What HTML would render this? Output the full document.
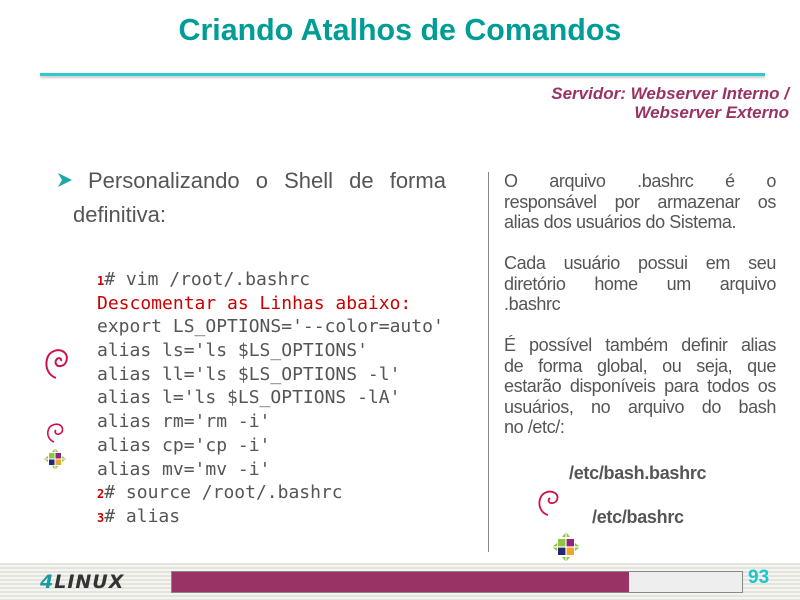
<!DOCTYPE html>
<html><head><meta charset="utf-8"><style>
body{margin:0;width:800px;height:600px;background:#fff;position:relative;overflow:hidden;font-family:"Liberation Sans",sans-serif}
.a{position:absolute;white-space:nowrap}
.title{left:0;width:800px;top:12px;text-align:center;font-size:31px;font-weight:bold;color:#009d96}
.title span{display:inline-block;transform:scaleX(.98)}
.rule{left:40px;top:73px;width:725px;height:3px;background:#33c9cc;box-shadow:0 2px 2px #ccc}
.sub{right:11px;top:84px;text-align:right;font-size:17px;font-weight:bold;font-style:italic;color:#993366;line-height:19px;letter-spacing:0}
.bul{left:55px;top:164px;width:391px;font-size:22px;color:#555;line-height:34px}
.bul div{display:flex;justify-content:space-between}
.code{left:97px;top:268px;font-family:"DejaVu Sans Mono","Liberation Mono",monospace;font-size:18px;line-height:23.7px;color:#555}
.code div{height:23.7px}
.code .n{color:#c00;font-size:12px;line-height:0;font-weight:bold}
.r{color:#c00}
.vl{left:488px;top:172px;width:1px;height:380px;background:#888}
.rt{left:504px;width:272px;font-size:18px;color:#555;line-height:20.5px;letter-spacing:-.4px}
.rt div{display:flex;justify-content:space-between}
.rt div.l{justify-content:flex-start;gap:5px}
.bb{font-size:18px;font-weight:bold;color:#555;letter-spacing:-.3px}
.foot{left:0;top:563px;width:800px;height:37px;background:repeating-linear-gradient(#e4e4df 0 2px,#f4f4f0 2px 4px)}
.bar{left:171px;top:571px;width:572px;height:22px;border:1px solid #888;background:#eee;box-sizing:border-box}
.bar i{position:absolute;left:0;top:0;bottom:0;width:457px;background:#993366}
.num{left:748px;top:567px;font-size:19px;font-weight:bold;color:#1ac8cc}
.logo{left:40px;top:571px;font-size:19px;font-weight:900;font-style:italic;color:#333;letter-spacing:1px;font-family:"DejaVu Sans",sans-serif}
</style></head><body>
<div class="a title"><span>Criando Atalhos de Comandos</span></div>
<div class="a rule"></div>
<div class="a sub">Servidor: Webserver Interno /<br>Webserver Externo</div>
<svg class="a" style="left:57px;top:172px" width="16" height="16" viewBox="0 0 16 16"><path d="M1 1L15 8L1 15L5 8Z" fill="#1aa8a8"/></svg>
<div class="a bul" style="left:55px">
<div style="padding-left:33px"><span>Personalizando</span><span>o</span><span>Shell</span><span>de</span><span>forma</span></div>
<div style="padding-left:18px">definitiva:</div></div>
<div class="a code"><div><span class="n">1</span># vim /root/.bashrc</div><div class="r">Descomentar as Linhas abaixo:</div><div>export LS_OPTIONS='--color=auto'</div><div>alias ls='ls $LS_OPTIONS'</div><div>alias ll='ls $LS_OPTIONS -l'</div><div>alias l='ls $LS_OPTIONS -lA'</div><div>alias rm='rm -i'</div><div>alias cp='cp -i'</div><div>alias mv='mv -i'</div><div><span class="n">2</span># source /root/.bashrc</div><div><span class="n">3</span># alias</div></div>
<svg class="a" style="left:42px;top:345px" width="28" height="36" viewBox="0 0 28 36"><path d="M14 33C6 30 3 22 5 14 7 6 16 3 22 7 27 11 25 20 19 21 14 22 12 17 15 14 17 12 20 14 19 16" fill="none" stroke="#d0104c" stroke-width="2"/></svg>
<svg class="a" style="left:45px;top:420px" width="22" height="24" viewBox="0 0 22 24"><path d="M9 22C4 20 2 15 3 11 4 5 11 3 15 5 19 8 18 13 14 14 11 15 9 12 11 10" fill="none" stroke="#d0104c" stroke-width="1.6"/></svg>
<svg class="a" style="left:44px;top:447px" width="22" height="24" viewBox="0 0 22 24"><rect x="5" y="6" width="6" height="6" fill="#8dc63f"/><rect x="11" y="6" width="6" height="6" fill="#932279"/><rect x="5" y="12" width="6" height="6" fill="#262577"/><rect x="11" y="12" width="6" height="6" fill="#efa724"/><path d="M11 1L8 5H14ZM11 23L8 19H14ZM0 12L4 9V15ZM22 12L18 9V15Z" fill="#8dc63f"/><path d="M11 1L11 23M1 12L21 12" stroke="#fff" stroke-width="1"/></svg>
<div class="a vl"></div>
<div class="a rt" style="top:171px">
<div><span>O</span><span>arquivo</span><span>.bashrc</span><span>é</span><span>o</span></div>
<div><span>responsável</span><span>por</span><span>armazenar</span><span>os</span></div>
<div class="l">alias dos usuários do Sistema.</div>
<div>&nbsp;</div>
<div><span>Cada</span><span>usuário</span><span>possui</span><span>em</span><span>seu</span></div>
<div><span>diretório</span><span>home</span><span>um</span><span>arquivo</span></div>
<div class="l">.bashrc</div>
<div>&nbsp;</div>
<div><span>É</span><span>possível</span><span>também</span><span>definir</span><span>alias</span></div>
<div><span>de</span><span>forma</span><span>global,</span><span>ou</span><span>seja,</span><span>que</span></div>
<div><span>estarão</span><span>disponíveis</span><span>para</span><span>todos</span><span>os</span></div>
<div><span>usuários,</span><span>no</span><span>arquivo</span><span>do</span><span>bash</span></div>
<div class="l">no /etc/:</div>
</div>
<div class="a bb" style="left:569px;top:463px">/etc/bash.bashrc</div>
<div class="a bb" style="left:592px;top:507px">/etc/bashrc</div>
<svg class="a" style="left:535px;top:485px" width="28" height="32" viewBox="0 0 28 32"><path d="M13 30C6 28 3 21 5 14 7 7 15 5 20 8 24 11 23 17 18 18 14 19 12 15 15 13" fill="none" stroke="#d0104c" stroke-width="1.8"/></svg>
<svg class="a" style="left:551px;top:531px" width="30" height="32" viewBox="0 0 30 32"><rect x="7" y="8" width="8" height="8" fill="#8dc63f"/><rect x="15" y="8" width="8" height="8" fill="#932279"/><rect x="7" y="16" width="8" height="8" fill="#262577"/><rect x="15" y="16" width="8" height="8" fill="#efa724"/><path d="M15 1L11 6H19ZM15 31L11 26H19ZM1 16L6 12V20ZM29 16L24 12V20Z" fill="#8dc63f"/><path d="M15 1L15 31M1 16L29 16" stroke="#fff" stroke-width="1.2"/></svg>
<div class="a foot"></div>
<div class="a logo"><span style="color:#1a9aa0">4</span>LINUX</div>
<div class="a bar"><i></i></div>
<div class="a num">93</div>
</body></html>
